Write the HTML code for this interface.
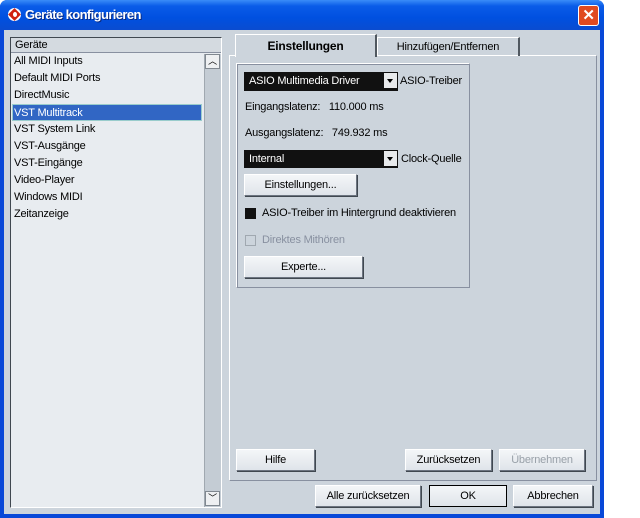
<!DOCTYPE html>
<html><head><style>
*{box-sizing:border-box;margin:0;padding:0}
body{width:640px;height:518px;background:#fff;font-family:"Liberation Sans",sans-serif;font-size:11px;letter-spacing:-0.2px;color:#000;position:relative;overflow:hidden}
.a{position:absolute}
.win{left:0;top:0;width:604px;height:518px;background:#0848d8;border-radius:7px 7px 0 0}
.title{left:0;top:0;width:604px;height:30px;border-radius:7px 7px 0 0;background:linear-gradient(#3a8cf8,#0a5ce8 20%,#0050e0 60%,#0a4cd0)}
.client{left:4px;top:30px;width:596px;height:484px;background:#ccd4dc}
.btn{position:absolute;background:linear-gradient(#f4f6f8,#dfe4ea);border:1px solid #fff;border-right-color:#6c7480;border-bottom-color:#6c7480;box-shadow:1px 1px 0 #404850;text-align:center;line-height:20px;font-size:11px}
.dd{position:absolute;background:#111;color:#fff;padding-left:5px;line-height:18px;font-size:11px}
.dd i{position:absolute;right:1px;top:1px;width:13px;height:15px;background:#e8eaec;}
.dd i:after{content:"";position:absolute;left:3px;top:6px;border:3.5px solid transparent;border-top:4px solid #000}
.li{position:absolute;left:13px;width:190px;height:17px;line-height:17px;padding-left:1px}
</style></head><body>
<div class="a win"></div>
<div class="a title"></div>
<div class="a" style="left:8px;top:8px;width:13px;height:13px;background:#fff;border-radius:50%;"></div>
<div class="a" style="left:10px;top:10px;width:9px;height:9px;background:#d02010;transform:rotate(45deg)"></div>
<div class="a" style="left:13px;top:12px;width:4px;height:5px;background:#fff;border-radius:50%"></div>
<div class="a" style="left:25px;top:7px;color:#fff;font-weight:bold;font-size:13px;letter-spacing:-0.6px;text-shadow:1px 1px 0 #0a2a80">Geräte konfigurieren</div>
<div class="a" style="left:578px;top:5px;width:21px;height:21px;background:#e04a20;border:1px solid #fff;border-radius:3px;color:#fff;font-weight:bold;font-size:15px;text-align:center;line-height:19px">✕</div>
<div class="a client"></div>
<!-- list -->
<div class="a" style="left:10px;top:37px;width:212px;height:471px;background:#e8ecf0;border:1px solid #404850;border-right-color:#fff;border-bottom-color:#fff"></div>
<div class="a" style="left:11px;top:38px;width:210px;height:15px;background:#d4dae0;border-bottom:1px solid #8890a0;padding-left:4px;line-height:14px">Geräte</div>
<div class="a" style="left:204px;top:54px;width:17px;height:453px;background:#c4ccd4;border-left:1px solid #a0a8b0"></div>
<div class="a" style="left:205px;top:54px;width:15px;height:15px;background:#eef0f2;border:1px solid #808890;text-align:center;font-size:9px;line-height:13px">︿</div>
<div class="a" style="left:205px;top:491px;width:15px;height:15px;background:#eef0f2;border:1px solid #808890;text-align:center;font-size:9px;line-height:13px">﹀</div>
<div class="li" style="top:53px">All MIDI Inputs</div>
<div class="li" style="top:70px">Default MIDI Ports</div>
<div class="li" style="top:87px">DirectMusic</div>
<div class="li" style="top:104px;background:#3166c4;color:#fff;width:190px;left:12px;border:1px solid #9cc">VST Multitrack</div>
<div class="li" style="top:121px">VST System Link</div>
<div class="li" style="top:138px">VST-Ausgänge</div>
<div class="li" style="top:155px">VST-Eingänge</div>
<div class="li" style="top:172px">Video-Player</div>
<div class="li" style="top:189px">Windows MIDI</div>
<div class="li" style="top:206px">Zeitanzeige</div>
<!-- tabs -->
<div class="a" style="left:229px;top:55px;width:368px;height:426px;border:1px solid #fff;border-right-color:#8890a0;border-bottom-color:#8890a0"></div>
<div class="a" style="left:377px;top:37px;width:143px;height:19px;border:1px solid #fff;border-right:2px solid #505860;border-bottom:none;text-align:center;line-height:18px">Hinzufügen/Entfernen</div>
<div class="a" style="left:235px;top:34px;width:142px;height:23px;background:#ccd4dc;border:1px solid #fff;border-right:2px solid #505860;border-bottom:none;text-align:center;line-height:22px;font-weight:bold;font-size:12px">Einstellungen</div>
<div class="a" style="left:236px;top:63px;width:234px;height:225px;border:1px solid #fff;border-right-color:#8890a0;border-bottom-color:#8890a0;box-shadow:inset 1px 1px 0 #8890a0"></div>
<div class="dd" style="left:244px;top:72px;width:154px;height:19px">ASIO Multimedia Driver<i></i></div>
<div class="a" style="left:400px;top:75px">ASIO-Treiber</div>
<div class="a" style="left:245px;top:101px">Eingangslatenz:&nbsp;&nbsp; 110.000 ms</div>
<div class="a" style="left:245px;top:127px">Ausgangslatenz:&nbsp;&nbsp; 749.932 ms</div>
<div class="dd" style="left:244px;top:150px;width:154px;height:18px">Internal<i></i></div>
<div class="a" style="left:401px;top:153px">Clock-Quelle</div>
<div class="btn" style="left:244px;top:174px;width:113px;height:22px">Einstellungen...</div>
<div class="a" style="left:245px;top:208px;width:11px;height:11px;background:#111"></div>
<div class="a" style="left:262px;top:207px">ASIO-Treiber im Hintergrund deaktivieren</div>
<div class="a" style="left:245px;top:235px;width:11px;height:11px;border:1px solid #a0a8b0"></div>
<div class="a" style="left:262px;top:234px;color:#8890a0">Direktes Mithören</div>
<div class="btn" style="left:244px;top:256px;width:119px;height:22px">Experte...</div>
<div class="btn" style="left:236px;top:449px;width:79px;height:22px">Hilfe</div>
<div class="btn" style="left:405px;top:449px;width:87px;height:22px">Zurücksetzen</div>
<div class="btn" style="left:499px;top:449px;width:86px;height:22px;color:#98a0a8">Übernehmen</div>
<div class="btn" style="left:315px;top:485px;width:106px;height:22px">Alle zurücksetzen</div>
<div class="btn" style="left:429px;top:485px;width:78px;height:22px;border:1px solid #000;box-shadow:none">OK</div>
<div class="btn" style="left:513px;top:485px;width:80px;height:22px">Abbrechen</div>
</body></html>
